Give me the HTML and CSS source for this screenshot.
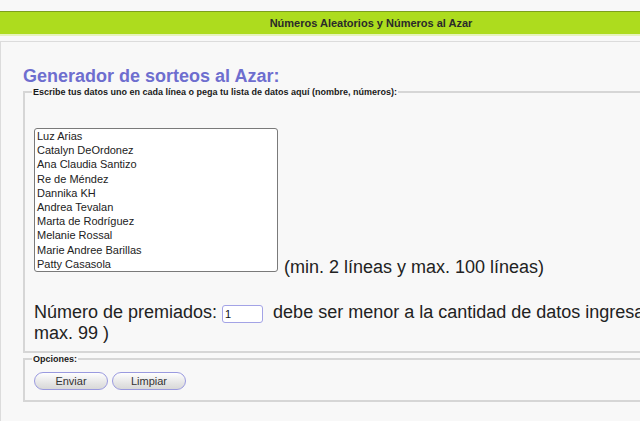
FILE: index.html
```html
<!DOCTYPE html>
<html lang="es">
<head>
<meta charset="utf-8">
<title>Generador de sorteos al Azar</title>
<link rel="stylesheet" href="styles.css">
</head>
<body>
<div class="page">
  <div class="topbar"><span class="topbar-title">Números Aleatorios y Números al Azar</span></div>
  <div class="main">
    <h1 class="title">Generador de sorteos al Azar:</h1>
    <fieldset class="box box-data">
      <legend class="box-legend">Escribe tus datos uno en cada línea o pega tu lista de datos aquí (nombre, números):</legend>
      <div class="list-row">
        <textarea class="list" rows="10">Luz Arias
Catalyn DeOrdonez
Ana Claudia Santizo
Re de Méndez
Dannika KH
Andrea Tevalan
Marta de Rodríguez
Melanie Rossal
Marie Andree Barillas
Patty Casasola</textarea>
        <span class="hint">(min. 2 líneas y max. 100 líneas)</span>
      </div>
      <p class="prize">Número de premiados: <input class="num" type="text" value="1"> debe ser menor a la cantidad de datos ingresados (min. 1 y<br>max. 99 )</p>
    </fieldset>
    <fieldset class="box box-options">
      <legend class="box-legend">Opciones:</legend>
      <div class="buttons">
        <button class="btn" type="button">Enviar</button>
        <button class="btn" type="button">Limpiar</button>
      </div>
    </fieldset>
  </div>
</div>
</body>
</html>
```
FILE: styles.css
```css
html, body {
  margin: 0;
  padding: 0;
  background: #f8f8f8;
  overflow: hidden;
}
body {
  font-family: "Liberation Sans", Arial, sans-serif;
  color: #222;
}
.page {
  width: 760px;
  padding-top: 11px;
}
.topbar {
  height: 22px;
  background: #addc1e;
  border-top: 1px solid #7d9f1c;
  border-bottom: 2px solid #e6f3bd;
  box-sizing: content-box;
  text-align: center;
  padding-left: 102px;
  width: 538px;
}
.topbar-title {
  font-size: 11px;
  font-weight: bold;
  line-height: 22px;
  color: #2a2a2a;
}
.main {
  margin-top: 5px;
  border-top: 1px solid #dcdcdc;
  border-left: 1px solid #dcdcdc;
  padding: 0 0 40px 22px;
}
.title {
  margin: 24px 0 0;
  font-size: 18px;
  font-weight: bold;
  line-height: normal;
  color: #6e6ecf;
}
.box {
  margin: 0;
  border: 2px solid #d6d6d6;
  padding: 0 10px 7px 9px;
  min-width: 0;
}
.box-options {
  margin-top: 1px;
  padding-bottom: 10px;
}
.box-legend {
  font-size: 9px;
  font-weight: bold;
  padding: 0 1px;
  margin-left: -2px;
  color: #1a1a1a;
}
.list-row {
  display: flex;
  align-items: flex-end;
  margin-top: 31px;
}
.list {
  box-sizing: border-box;
  width: 244px;
  height: 144px;
  margin: 0;
  padding: 0 2px;
  border: 1px solid #7a7a7a;
  border-radius: 3px;
  background: #fff;
  font-family: "Liberation Sans", Arial, sans-serif;
  font-size: 11px;
  line-height: 14.2px;
  color: #222;
  resize: none;
  overflow: hidden;
}
.hint {
  font-size: 18px;
  line-height: 18px;
  margin-left: 6px;
  margin-bottom: -4px;
}
.prize {
  margin: 30px 0 0;
  font-size: 18px;
  line-height: 20.5px;
}
.num {
  box-sizing: border-box;
  width: 41px;
  height: 18px;
  margin: 0 5px 0 0;
  padding: 0 2px;
  border: 1px solid #a3a3e6;
  border-radius: 3px;
  background: #fff;
  font-family: "Liberation Sans", Arial, sans-serif;
  font-size: 11px;
  color: #111;
}
.buttons {
  display: flex;
  gap: 4px;
  margin-top: 8px;
}
.btn {
  box-sizing: border-box;
  width: 74px;
  height: 18px;
  margin: 0;
  padding: 0;
  border: 1px solid #9a9adf;
  border-radius: 9px;
  background: linear-gradient(#fefefe, #e6e6e6 60%, #d8d8d8);
  font-family: "Liberation Sans", Arial, sans-serif;
  font-size: 11px;
  color: #333;
}
```
